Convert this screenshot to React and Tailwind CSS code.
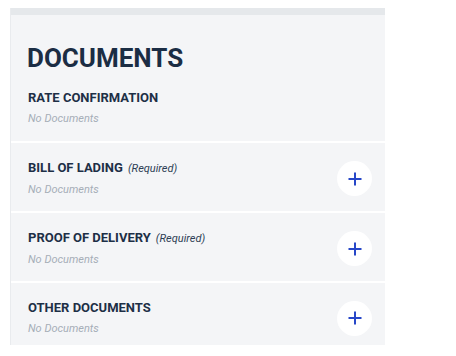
import React from 'react';

const rows = [
  { title: 'BILL OF LADING', required: true },
  { title: 'PROOF OF DELIVERY', required: true },
  { title: 'OTHER DOCUMENTS', required: false },
];

// round white add button with a blue plus
const AddButton = () => (
  <button className="w-[35px] h-[35px] rounded-full bg-white flex items-center justify-center shrink-0">
    <svg width="14" height="14" viewBox="0 0 14 14" fill="none">
      <path d="M7 0.5v13M0.5 7h13" stroke="#2747c8" strokeWidth="2" />
    </svg>
  </button>
);

const DocRow = ({ title, required }) => (
  <div className="flex items-center justify-between pl-[17px] pr-[13px] pt-[17px] pb-[14px] border-t-2 border-white">
    <div>
      <div className="flex items-baseline gap-[5px] leading-[16px]">
        <span className="text-[13px] leading-[16px] font-bold text-[#1d2f46]">{title}</span>
        {required && <span className="text-[11px] leading-[16px] italic text-[#2d3e55]">(Required)</span>}
      </div>
      <p className="mt-[6px] text-[11px] leading-[14px] italic text-[#a6aeb8]">No Documents</p>
    </div>
    <AddButton />
  </div>
);

export default function App() {
  return (
    <div className="w-[456px] h-[356px] bg-white pt-[8px] pl-[10px]" style={{ fontFamily: 'Roboto, "Liberation Sans", sans-serif' }}>
      <div className="w-[375px] h-[337px] overflow-hidden bg-[#f4f5f7] border-l border-[#e9ebee]">
        <div className="h-[7px] bg-[#e5e8eb]" />
        <div className="pl-[16px] pt-[28px] pb-[15px]">
          <h2 className="text-[26px] leading-[30px] font-bold text-[#1b2d44]">DOCUMENTS</h2>
          <div className="mt-[17px] pl-[1px]">
            <span className="text-[13px] leading-[16px] font-bold text-[#1d2f46] block">RATE CONFIRMATION</span>
            <p className="mt-[6px] text-[11px] leading-[14px] italic text-[#a6aeb8]">No Documents</p>
          </div>
        </div>
        {rows.map((r) => (
          <DocRow key={r.title} {...r} />
        ))}
      </div>
    </div>
  );
}
